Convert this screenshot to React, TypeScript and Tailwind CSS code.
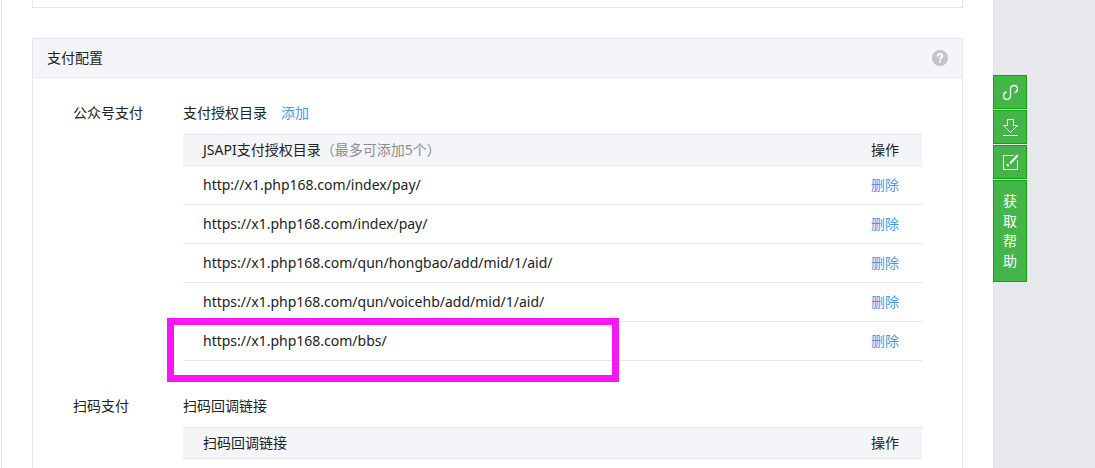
import React from "react";

interface Section {
  label: string;
  title: string;
  action?: string;
  column: string;
  hint?: string;
  rows: string[];
  highlightLast?: boolean;
}

const sections: Section[] = [
  {
    label: "公众号支付",
    title: "支付授权目录",
    action: "添加",
    column: "JSAPI支付授权目录",
    hint: "（最多可添加5个）",
    rows: [
      "http://x1.php168.com/index/pay/",
      "https://x1.php168.com/index/pay/",
      "https://x1.php168.com/qun/hongbao/add/mid/1/aid/",
      "https://x1.php168.com/qun/voicehb/add/mid/1/aid/",
      "https://x1.php168.com/bbs/",
    ],
    highlightLast: true,
  },
  {
    label: "扫码支付",
    title: "扫码回调链接",
    column: "扫码回调链接",
    rows: [],
  },
];

function UrlTable({ section }: { section: Section }) {
  return (
    <div className="relative mt-[11px]">
      <table className="w-full border-separate border-spacing-0 text-left">
        <thead>
          <tr className="bg-[#f4f5f9]">
            <th className="border-y border-[#e7e7eb] px-5 py-[5px] font-normal">
              {section.column}
              {section.hint && (
                <span className="text-[#8d8d8d]">{section.hint}</span>
              )}
            </th>
            <th className="w-[71px] border-y border-[#e7e7eb] pl-5 font-normal">
              操作
            </th>
          </tr>
        </thead>
        <tbody>
          {section.rows.map((url) => (
            <tr key={url}>
              <td className="border-b border-[#e7e7eb] px-5 py-[9px]">{url}</td>
              <td className="border-b border-[#e7e7eb] pl-5">
                <a href="#" className="text-[#459ae9]">
                  删除
                </a>
              </td>
            </tr>
          ))}
        </tbody>
      </table>
      {section.highlightLast && (
        <div className="pointer-events-none absolute -bottom-[21px] -left-4 h-16 w-[452px] border-[7px] border-[#f518f5]" />
      )}
    </div>
  );
}

function App() {
  return (
    <div className="flex min-h-screen bg-white pl-px font-['Noto_Sans','Noto_Sans_CJK_SC',sans-serif] text-[14px] leading-5 text-[#222222]">
      {/* Main Content */}
      <main className="flex flex-1 flex-col border-x border-[#e0e1e5] px-[30px]">
        <div className="h-2 border-x border-b border-[#e7e7eb]" />

        <section className="mt-[30px] flex-1 border-x border-t border-[#e7e7eb]">
          <header className="flex items-center justify-between border-b border-[#e7e7eb] bg-[#f4f5f9] px-[14px] py-[9px]">
            <h2>支付配置</h2>
            <button type="button" aria-label="帮助">
              <svg className="block h-4 w-4" viewBox="0 0 16 16" fill="none">
                <circle cx="8" cy="8" r="8" fill="#c4c4c4" />
                <path
                  d="M5.8 6.4V6C5.8 4.600 6.700 4 8 4s2.300.7 2.300 1.900C10.300 7.500 8 7.400 8 9.600"
                  stroke="#fff"
                  strokeWidth="2"
                />
                <path d="M7 10.500h2v2H7z" fill="#fff" />
              </svg>
            </button>
          </header>

          <div className="flex flex-col gap-[35px] px-10 pt-[25px]">
            {sections.map((section) => (
              <div key={section.label} className="flex">
                <div className="w-[110px] shrink-0">{section.label}</div>
                <div className="flex-1">
                  <div className="flex gap-[14px]">
                    <h3>{section.title}</h3>
                    {section.action && (
                      <a href="#" className="text-[#459ae9]">
                        {section.action}
                      </a>
                    )}
                  </div>
                  <UrlTable section={section} />
                </div>
              </div>
            ))}
          </div>
        </section>
      </main>

      {/* Floating toolbar */}
      <aside className="relative w-[101px] shrink-0 bg-[#e7e8eb]">
        <div className="absolute top-[75px] -left-px flex w-[34px] flex-col gap-px bg-[#e7e8eb] text-white">
          <button
            type="button"
            aria-label="链接"
            className="flex h-[34px] items-center justify-center border border-[#0ca50c] bg-[#44b549]"
          >
            <svg
              className="h-4 w-4"
              viewBox="0 0 16 16"
              fill="none"
              stroke="currentColor"
              strokeWidth="1.3"
            >
              <path d="M4.500 8C2.500 8.500 1.500 9.800 1.500 11.700c0 2.200 1.300 3.600 3.500 3.600s3.500-1.500 3.500-3.500V5c0-2 1.300-3.500 3.500-3.500s3.500 1.400 3.500 3.500c0 1.900-1.200 3.200-3 3.700" />
            </svg>
          </button>
          <button
            type="button"
            aria-label="下载"
            className="flex h-[34px] items-center justify-center border border-[#0ca50c] bg-[#44b549]"
          >
            <svg
              className="h-[18px] w-4"
              viewBox="0 0 16 18"
              fill="none"
              stroke="currentColor"
            >
              <path d="M5.500 1.500h6v6h4L8.500 14.500 1.500 7.500h4z" />
              <path d="M1 17.500h15" />
            </svg>
          </button>
          <button
            type="button"
            aria-label="编辑"
            className="flex h-[34px] items-center justify-center border border-[#0ca50c] bg-[#44b549]"
          >
            <svg
              className="h-4 w-4"
              viewBox="0 0 16 16"
              fill="none"
              stroke="currentColor"
            >
              <path d="M11.500 1.500h-10v14h14V6" />
              <path d="M16 1 8 9.500" strokeWidth="2" />
              <path d="M5.500 10v1.500H7" strokeWidth="1.5" />
            </svg>
          </button>
          <button
            type="button"
            className="border border-[#0ca50c] bg-[#44b549] px-[9px] py-[10px]"
          >
            获取帮助
          </button>
        </div>
      </aside>
    </div>
  );
}

export default App;
